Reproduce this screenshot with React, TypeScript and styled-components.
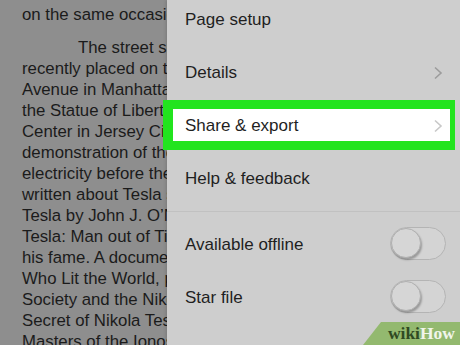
import styled, { createGlobalStyle } from 'styled-components';

const GlobalStyle = createGlobalStyle`
  html, body {
    margin: 0;
    padding: 0;
    width: 460px;
    height: 345px;
    overflow: hidden;
    font-family: 'Liberation Sans', Arial, sans-serif;
  }
`;

const Screen = styled.div`
  display: flex;
  width: 460px;
  height: 345px;
  overflow: hidden;
  position: relative;
`;

const Doc = styled.div`
  width: 167px;
  flex-shrink: 0;
  background: #8e8e8e;
  color: #1b1b1b;
  font-size: 16.8px;
  line-height: 21px;
  padding: 4px 0 0 22px;
  box-sizing: border-box;
  overflow: hidden;
`;

const Para = styled.div`
  margin-bottom: 12px;
`;

const Line = styled.div<{ $indent?: boolean }>`
  white-space: nowrap;
  padding-left: ${(p) => (p.$indent ? '56px' : '0')};
`;

const Panel = styled.div`
  flex: 1;
  background: #cecece;
  box-shadow: -1px 0 3px rgba(0, 0, 0, 0.15);
  display: flex;
  flex-direction: column;
  z-index: 1;
`;

const Section = styled.div<{ $first?: boolean }>`
  display: flex;
  flex-direction: column;
  margin-top: ${(p) => (p.$first ? '-7px' : '0')};
  padding: ${(p) => (p.$first ? '0 0 6px' : '6px 0 0')};
`;

const Divider = styled.div`
  height: 1px;
  background: #c1c1c1;
`;

const Row = styled.div<{ $highlight?: boolean }>`
  position: relative;
  height: 53px;
  display: flex;
  align-items: center;
  justify-content: space-between;
  padding: 0 15px 0 18px;
  font-size: 17px;
  color: #1f1f1f;

  ${(p) =>
    p.$highlight &&
    `
    &::before {
      content: '';
      position: absolute;
      left: -4px;
      right: 5px;
      top: 1px;
      bottom: 2px;
      background: #ffffff;
      border: 9px solid #22e41e;
      border-right-width: 5px;
      border-left-width: 10px;
    }
  `}
`;

const Label = styled.span`
  position: relative;
`;

const Chevron = styled.svg`
  position: relative;
  width: 10px;
  height: 14px;
  margin-right: 2px;
`;

const Toggle = styled.div`
  width: 56px;
  height: 33px;
  margin-top: -3px;
  border-radius: 17px;
  box-sizing: border-box;
  border: 1.5px solid #b4b4b4;
  background: #d4d4d4;
  position: relative;
  margin-right: -1px;
`;

const Knob = styled.div`
  position: absolute;
  left: 0;
  top: 0;
  width: 30px;
  height: 30px;
  border-radius: 50%;
  background: #d6d6d6;
  border: 1px solid #b0b0b0;
  box-sizing: border-box;
  box-shadow: 1px 2px 2px rgba(0, 0, 0, 0.28);
`;

const Badge = styled.div`
  position: absolute;
  right: 0;
  bottom: 0;
  width: 97px;
  height: 23px;
  background: #93b96f;
  clip-path: polygon(18px 0, 100% 0, 100% 100%, 0 100%);
  display: flex;
  align-items: center;
  justify-content: flex-end;
  padding-right: 5px;
  box-sizing: border-box;
  font-family: 'Liberation Serif', 'DejaVu Serif', serif;
  font-weight: bold;
  font-size: 17.5px;
  z-index: 2;
`;

const Wiki = styled.span`
  color: #2f4a22;
`;

const How = styled.span`
  color: #f1f5ea;
`;

const docLines = [
  'recently placed on the corner of 40th Street and 6th',
  'Avenue in Manhattan, and a statue of Tesla faces',
  'the Statue of Liberty from the Liberty Science',
  'Center in Jersey City. Tesla\u2019s first public',
  'demonstration of the induction motor and',
  'electricity before the Institute was celebrated. Books',
  'written about Tesla since his death include Prodigal',
  'Tesla by John J. O\u2019Neill (1944) and',
  'Tesla: Man out of Time by Margaret Cheney, which renewed',
  'his fame. A documentary, Nikola Tesla: The Genius',
  'Who Lit the World, produced by the Tesla Memorial',
  'Society and the Nikola Tesla Museum, and The',
  'Secret of Nikola Tesla (1980), and',
  'Masters of the Ionosphere',
];

const ChevronIcon = ({ color }: { color: string }) => (
  <Chevron viewBox="0 0 10 14">
    <path d="M2 1.5 L8 7 L2 12.5" fill="none" stroke={color} strokeWidth="1.6" />
  </Chevron>
);

export default function App() {
  return (
    <>
      <GlobalStyle />
      <Screen>
        <Doc>
          <Para>
            <Line>on the same occasion, a plaque was unveiled</Line>
          </Para>
          <Line $indent>The street sign “Nikola Tesla Corner” was</Line>
          {docLines.map((l) => (
            <Line key={l}>{l}</Line>
          ))}
        </Doc>
        <Panel>
          <Section $first>
            <Row>
              <Label>Page setup</Label>
            </Row>
            <Row>
              <Label>Details</Label>
              <ChevronIcon color="#9c9c9c" />
            </Row>
            <Row $highlight>
              <Label>Share &amp; export</Label>
              <ChevronIcon color="#c8c8c8" />
            </Row>
            <Row>
              <Label>Help &amp; feedback</Label>
            </Row>
          </Section>
          <Divider />
          <Section>
            <Row>
              <Label>Available offline</Label>
              <Toggle>
                <Knob />
              </Toggle>
            </Row>
            <Row>
              <Label>Star file</Label>
              <Toggle>
                <Knob />
              </Toggle>
            </Row>
          </Section>
        </Panel>
        <Badge>
          <Wiki>wiki</Wiki>
          <How>How</How>
        </Badge>
      </Screen>
    </>
  );
}
